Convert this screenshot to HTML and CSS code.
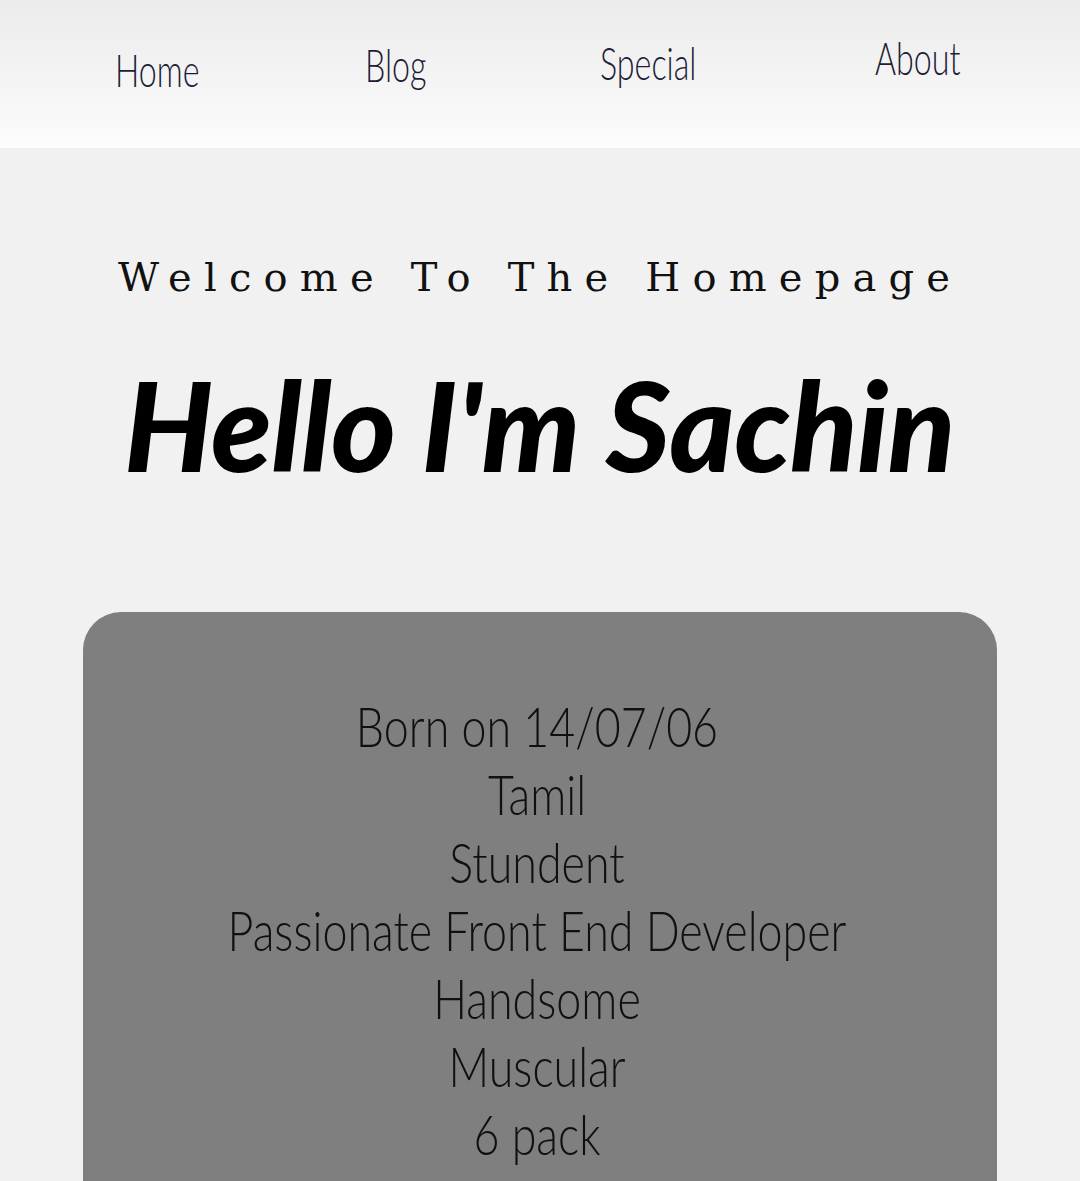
FILE: index.html
```html
<!DOCTYPE html>
<html lang="en">
<head>
<meta charset="utf-8">
<title>Sachin</title>
<link rel="stylesheet" href="styles.css">
</head>
<body>
<header class="topbar">
  <nav class="nav">
    <a class="nav-link home" href="#">Home</a>
    <a class="nav-link blog" href="#">Blog</a>
    <a class="nav-link special" href="#">Special</a>
    <a class="nav-link about" href="#">About</a>
  </nav>
</header>
<main class="main">
  <p class="welcome">Welcome To The Homepage</p>
  <h1 class="title">Hello I'm Sachin</h1>
  <section class="card">
    <p class="line">Born on 14/07/06</p>
    <p class="line">Tamil</p>
    <p class="line">Stundent</p>
    <p class="line">Passionate Front End Developer</p>
    <p class="line">Handsome</p>
    <p class="line">Muscular</p>
    <p class="line">6 pack</p>
  </section>
</main>
</body>
</html>
```
FILE: styles.css
```css
html, body {
  margin: 0;
  padding: 0;
}
body {
  background: #f1f1f1;
  width: 1080px;
  height: 1181px;
  overflow: hidden;
  font-family: Lato, "Liberation Sans", sans-serif;
}
.topbar {
  height: 148px;
  background: linear-gradient(#ebebeb, #fcfcfc);
}
.nav {
  display: flex;
  align-items: flex-start;
  padding-left: 115px;
}
.nav-link {
  display: inline-block;
  color: #1d1d35;
  text-decoration: none;
  font-size: 46px;
  line-height: 50px;
  font-weight: 300;
  transform: scaleX(0.7);
  transform-origin: left top;
  white-space: nowrap;
}
.home { width: 250px; margin-top: 45px; }
.blog { width: 235px; margin-top: 40px; }
.special { width: 275px; margin-top: 38px; }
.about { margin-top: 33px; }
.main {
  padding-top: 104px;
}
.welcome {
  margin: 0 0 0 118px;
  font-family: "DejaVu Serif", "Liberation Serif", serif;
  font-size: 40px;
  line-height: 50px;
  letter-spacing: 12.2px;
  color: #111;
  white-space: nowrap;
}
.title {
  margin: 57px 0 0 124px;
  font-family: Lato, sans-serif;
  font-weight: 900;
  font-style: italic;
  font-size: 124px;
  line-height: 130px;
  letter-spacing: -0.5px;
  color: #000;
  white-space: nowrap;
}
.card {
  box-sizing: border-box;
  margin: 123px 83px 0 83px;
  height: 569px;
  background: #7f7f7f;
  border-radius: 38px 38px 0 0;
  padding: 80px 6px 0 0;
  text-align: center;
}
.line {
  margin: 0;
  font-size: 56px;
  line-height: 68px;
  font-weight: 300;
  color: #101010;
  white-space: nowrap;
  transform: scaleX(0.8);
}
```
